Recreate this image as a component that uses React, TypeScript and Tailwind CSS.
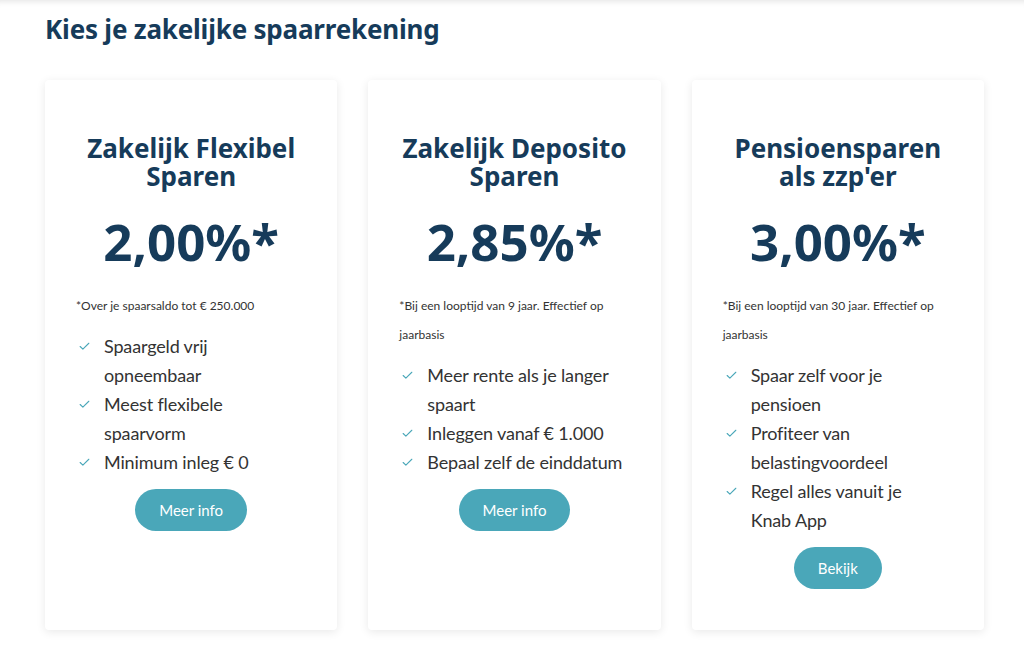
import { Check } from 'lucide-react';

// bullet lines are split the same way the design wraps them
const CARDS = [
  {
    title: ['Zakelijk Flexibel', 'Sparen'],
    rate: '2,00%*',
    note: '*Over je spaarsaldo tot € 250.000',
    bullets: [['Spaargeld vrij', 'opneembaar'], ['Meest flexibele', 'spaarvorm'], ['Minimum inleg € 0']],
    cta: 'Meer info',
  },
  {
    title: ['Zakelijk Deposito', 'Sparen'],
    rate: '2,85%*',
    note: '*Bij een looptijd van 9 jaar. Effectief op jaarbasis',
    bullets: [['Meer rente als je langer', 'spaart'], ['Inleggen vanaf € 1.000'], ['Bepaal zelf de einddatum']],
    cta: 'Meer info',
  },
  {
    title: ['Pensioensparen', "als zzp'er"],
    rate: '3,00%*',
    note: '*Bij een looptijd van 30 jaar. Effectief op jaarbasis',
    bullets: [['Spaar zelf voor je', 'pensioen'], ['Profiteer van', 'belastingvoordeel'], ['Regel alles vanuit je', 'Knab App']],
    cta: 'Bekijk',
  },
];

export default function App() {
  return (
    <div className="min-h-[649px] bg-white shadow-[inset_0_7px_6px_-6px_rgba(0,0,0,0.12)] font-['Lato',sans-serif]">
      <div className="px-[45px] pt-[13px] pb-[19px]">
        <h2 className="text-[26px] leading-[32px] font-bold text-[#163b5a] font-['Noto_Sans',sans-serif] tracking-[-0.2px]">
          Kies je zakelijke spaarrekening
        </h2>

        {/* cards */}
        <div className="mt-[35px] grid grid-cols-3 gap-[31px] w-[939px]">
          {CARDS.map((card) => (
            <div
              key={card.rate}
              className="h-[550px] rounded-[4px] bg-white px-[31px] pt-[54px] shadow-[0_2px_10px_rgba(0,0,0,0.09)]"
            >
              <h3 className="text-center text-[26px] leading-[28px] font-bold text-[#163b5a] font-['Noto_Sans',sans-serif]">
                <span className="block">{card.title[0]}</span>
                <span className="block">{card.title[1]}</span>
              </h3>
              <div className="mt-[22px] text-center text-[51px] leading-[58px] font-bold text-[#163b5a] font-['Noto_Sans',sans-serif]">
                {card.rate}
              </div>
              <p className="mt-[21px] text-[12px] leading-[29px] text-[#333]">{card.note}</p>
              <ul className="mt-[12px]">
                {card.bullets.map((lines) => (
                  <li key={lines[0]} className="flex text-[18px] leading-[29px] tracking-[-0.15px] text-[#333]">
                    <Check className="mt-[8px] ml-[2px] mr-[13px] h-[13px] w-[13px] shrink-0 text-[#4aa7b9]" strokeWidth={2} />
                    <span className="flex flex-col whitespace-nowrap">
                      {lines.map((l) => (
                        <span key={l}>{l}</span>
                      ))}
                    </span>
                  </li>
                ))}
              </ul>
              <div className="mt-[12px] flex justify-center">
                <button className="h-[42px] rounded-full bg-[#4aa7b9] px-[24px] text-[15px] text-white">
                  {card.cta}
                </button>
              </div>
            </div>
          ))}
        </div>
      </div>
    </div>
  );
}
